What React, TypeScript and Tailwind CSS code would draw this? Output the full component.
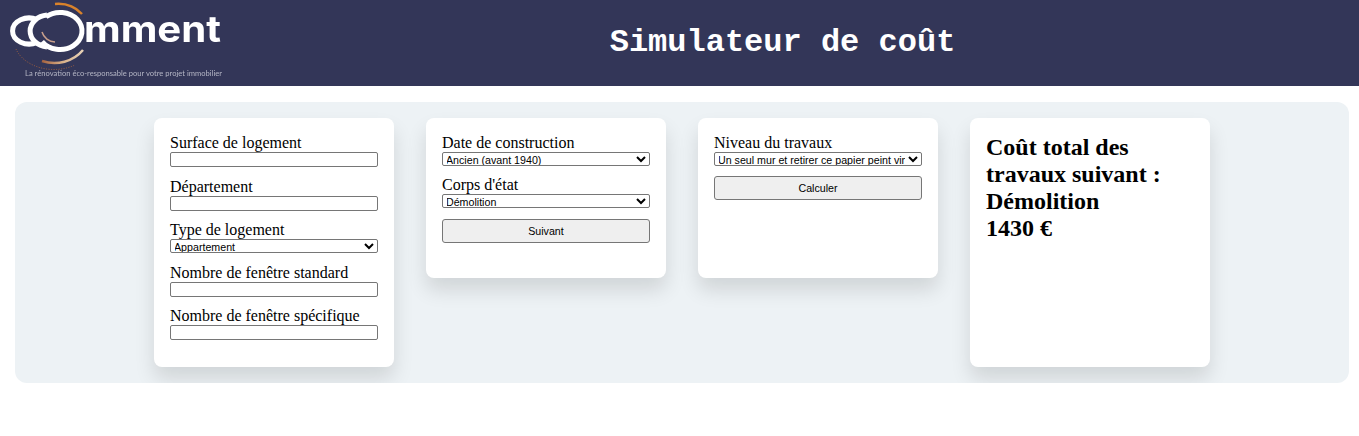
const serif = "font-['Liberation_Serif',serif]";
const control = "block w-[208px] border border-[#767676] text-black font-['Liberation_Sans',sans-serif] text-[10.67px]";
const card = "w-60 rounded-lg bg-white p-4 shadow-[0_12px_20px_rgba(0,0,0,0.12)]";

function Label({ children }: { children: string }) {
  return <label className={`block h-[18px] text-[16px] leading-[18px] text-black ${serif}`}>{children}</label>;
}

function TextField({ label, className }: { label: string; className?: string }) {
  return (
    <div className={className}>
      <Label>{label}</Label>
      <input type="text" className={`${control} h-[15px] rounded-[2px] bg-white`} />
    </div>
  );
}

function SelectField({ label, value, className }: { label: string; value: string; className?: string }) {
  return (
    <div className={className}>
      <Label>{label}</Label>
      <select defaultValue={value} className={`${control} h-[14px] rounded-[2px] bg-white indent-[-1px] leading-normal`}>
        <option>{value}</option>
      </select>
    </div>
  );
}

function ActionButton({ children, className }: { children: string; className?: string }) {
  return (
    <button className={`${control} h-[24px] rounded-[3px] bg-[#efefef] ${className}`}>{children}</button>
  );
}

function Logo() {
  return (
    <svg width="226" height="86" viewBox="0 0 226 86" className="shrink-0 overflow-visible blur-[0.4px]">
      <defs>
        <linearGradient id="lowerArc" x1="0" y1="0" x2="1" y2="0">
          <stop offset="0" stopColor="#a5623f" />
          <stop offset="0.5" stopColor="#d9b088" />
          <stop offset="1" stopColor="#e8d3b8" />
        </linearGradient>
      </defs>
      <path d="M37 19.6 A16.5 13 0 1 0 37 42.4" fill="none" stroke="#fff" strokeWidth="5" />
      <path d="M47 15.1 A19 16 0 0 0 47 46.9" fill="none" stroke="#fff" strokeWidth="5" />
      <path d="M46 16.7 A22 18.5 0 1 1 42 41.6" fill="none" stroke="#fff" strokeWidth="5" />
      <path d="M55 4 A32 30 0 0 1 82 14" fill="none" stroke="#d9822b" strokeWidth="2.5" />
      <path d="M42 61 A36 33 0 0 0 83 50" fill="none" stroke="url(#lowerArc)" strokeWidth="2.5" />
      <path d="M42 32 A14 14 0 0 0 55 42" fill="none" stroke="#c9a08c" strokeWidth="1.5" />
      <path d="M16 49 A40 30 0 0 0 75 65" fill="none" stroke="#a5623f" strokeWidth="1" strokeDasharray="1 1.5" />
      <text x="84" y="42" fill="#fff" fontFamily="Inter, sans-serif" fontWeight="700" fontSize="36" textLength="137" lengthAdjust="spacingAndGlyphs">mment</text>
      <text x="25" y="76" fill="#b4b5c4" fontFamily="Lato, sans-serif" fontSize="7.1" textLength="197" lengthAdjust="spacingAndGlyphs">La rénovation éco-responsable pour votre projet immobilier</text>
    </svg>
  );
}

export default function App() {
  return (
    <div className="min-h-[436px] bg-white">
      <header className="flex h-[86px] items-center bg-[#333658]">
        <div className="w-[206px]">
          <Logo />
        </div>
        <h1 className="flex-1 text-center font-['Liberation_Mono',monospace] text-[32px] font-bold text-white">
          Simulateur de coût
        </h1>
      </header>

      <main className="ml-[15px] mr-[10px] mt-4 flex justify-center gap-8 overflow-hidden rounded-xl bg-[#edf2f5] p-4">
        <section className={`h-[249px] ${card}`}>
          <TextField label="Surface de logement" />
          <TextField label="Département" className="mt-[11px]" />
          <SelectField label="Type de logement" value="Appartement" className="mt-[10px]" />
          <TextField label="Nombre de fenêtre standard" className="mt-[11px]" />
          <TextField label="Nombre de fenêtre spécifique" className="mt-[10px]" />
        </section>

        <section className={`h-40 ${card}`}>
          <SelectField label="Date de construction" value="Ancien (avant 1940)" />
          <SelectField label="Corps d'état" value="Démolition" className="mt-[10px]" />
          <ActionButton className="mt-[11px]">Suivant</ActionButton>
        </section>

        <section className={`h-40 ${card}`}>
          <SelectField label="Niveau du travaux" value="Un seul mur et retirer ce papier peint vinyle" />
          <ActionButton className="mt-[10px]">Calculer</ActionButton>
        </section>

        <section className={`h-[249px] ${card}`}>
          <h2 className={`text-[24px] font-bold leading-[27px] text-black ${serif}`}>
            Coût total des travaux suivant :<br />
            Démolition<br />
            1430 €
          </h2>
        </section>
      </main>
    </div>
  );
}
